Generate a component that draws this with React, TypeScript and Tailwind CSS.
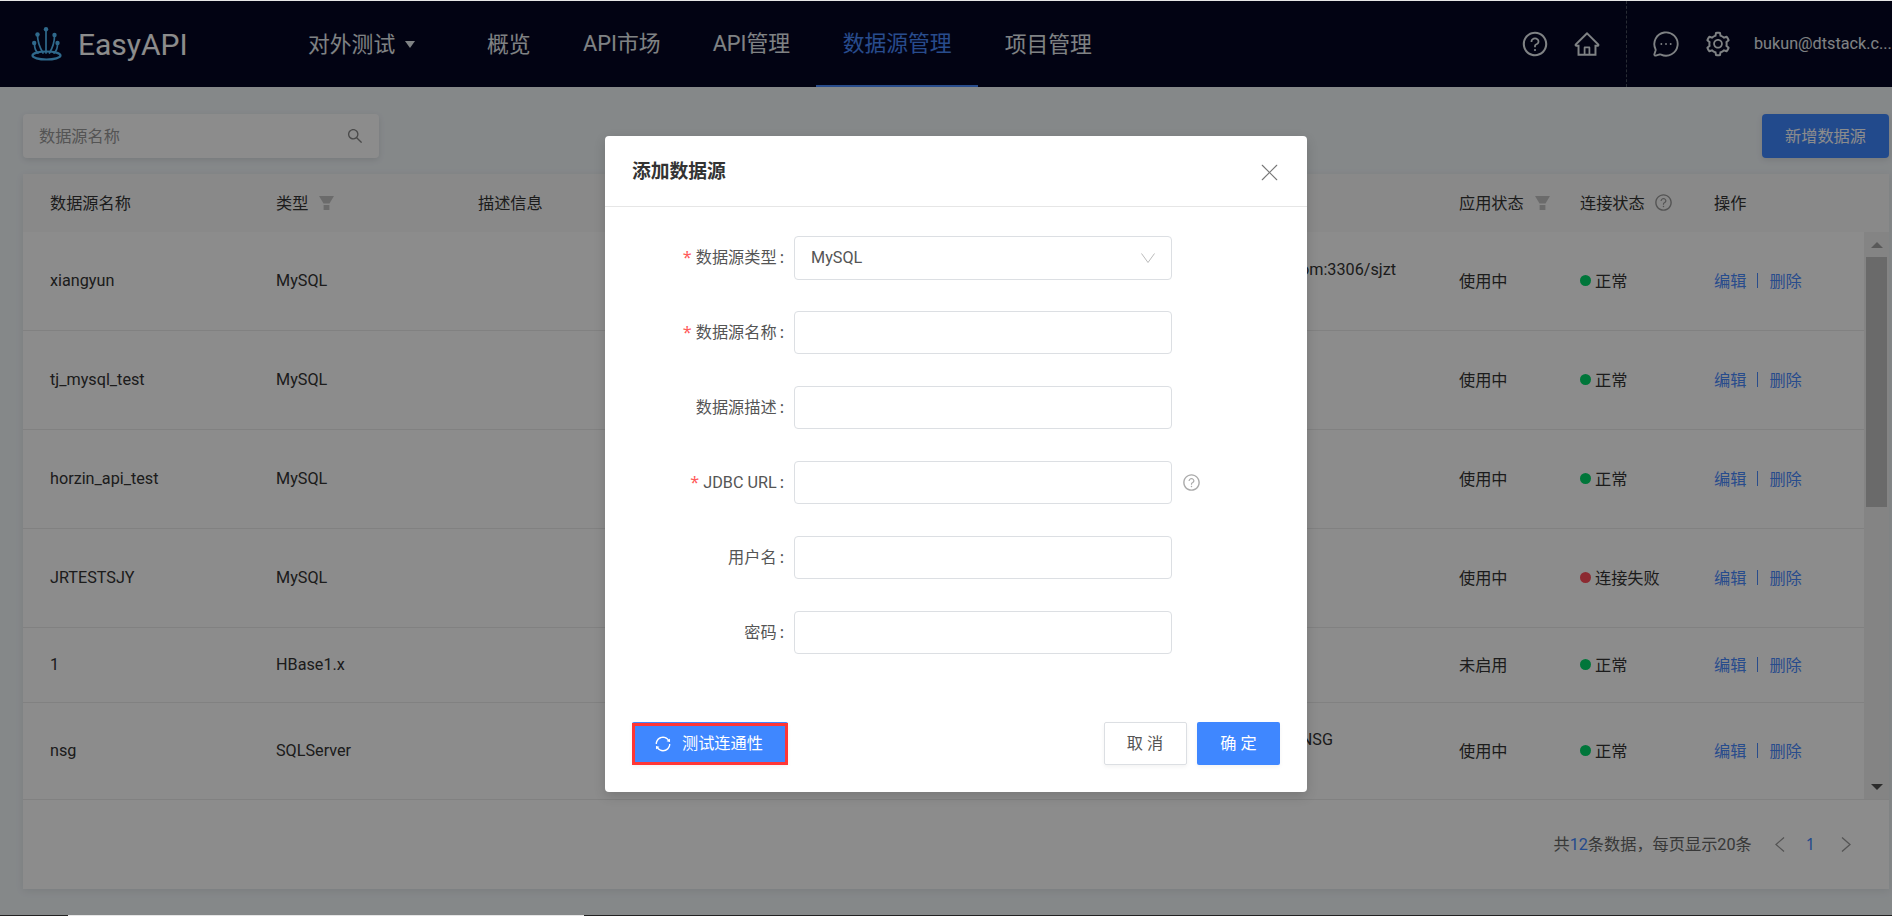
import { MessageCircleMore, X } from 'lucide-react'
import { AiOutlineHome, AiOutlineQuestionCircle, AiOutlineSearch, AiOutlineSetting, AiOutlineSync } from 'react-icons/ai'

interface Row {
  name: string
  type: string
  url?: string
  urlPad?: string
  state: string
  ok: boolean
  height: string
}

const rows: Row[] = [
  { name: 'xiangyun', type: 'MySQL', url: 'com:3306/sjzt', urlPad: 'pr-[63px]', state: '使用中', ok: true, height: 'h-[99px]' },
  { name: 'tj_mysql_test', type: 'MySQL', state: '使用中', ok: true, height: 'h-[99px]' },
  { name: 'horzin_api_test', type: 'MySQL', state: '使用中', ok: true, height: 'h-[99px]' },
  { name: 'JRTESTSJY', type: 'MySQL', state: '使用中', ok: false, height: 'h-[99px]' },
  { name: '1', type: 'HBase1.x', state: '未启用', ok: true, height: 'h-[75px]' },
  { name: 'nsg', type: 'SQLServer', url: 'NSG', urlPad: 'pr-[126px]', state: '使用中', ok: true, height: 'h-[96px]' },
]

const gridCols = 'grid grid-cols-[226px_202px_302px_679px_121px_134px_1fr] pl-[27px] items-center'

// latin strings sit narrower than Noto Sans in the reference
function L({ children }: { children: React.ReactNode }) {
  return <span className="font-['Roboto',sans-serif]">{children}</span>
}

function Logo() {
  return (
    <svg width="32" height="34" viewBox="0 0 32 34" fill="none" stroke="#56c0ff" strokeWidth="1.7" strokeLinecap="round">
      <ellipse cx="15.5" cy="28.5" rx="14" ry="4" strokeWidth="2.2" />
      <path d="M15 3v23" />
      <path d="M6.5 8c0 6 2 12 5.5 18" />
      <path d="M23.5 9c0 6-1.5 11-5 17" />
      <path d="M3.5 17c0 4 1 7 3.5 9" />
      <path d="M26.5 17c0 4-1 7-3.5 9" />
      <g fill="#56c0ff" stroke="none">
        <circle cx="15" cy="2.2" r="2.2" />
        <circle cx="6.5" cy="7.5" r="2.2" />
        <circle cx="23.5" cy="8" r="2.2" />
        <circle cx="3.2" cy="16" r="2.2" />
        <circle cx="26.5" cy="16" r="2.2" />
      </g>
    </svg>
  )
}

function FilterIcon() {
  return (
    <svg width="15" height="14" viewBox="0 0 15 14" className="ml-[11px]">
      <path d="M0 0h15l-4.5 7.5h-6z" fill="#c4c4c4" />
      <rect x="4.6" y="9" width="5.8" height="5" fill="#c4c4c4" />
    </svg>
  )
}

function PageArrow({ right }: { right?: boolean }) {
  return (
    <svg width="10" height="15" viewBox="0 0 10 15" fill="none" stroke="#999" strokeWidth="1.3">
      <path d={right ? 'M1 0.5l8 7-8 7' : 'M9 0.5l-8 7 8 7'} />
    </svg>
  )
}

function FormRow({ label, required, children }: { label: React.ReactNode; required?: boolean; children: React.ReactNode }) {
  return (
    <div className="flex h-[75px] items-start">
      <div className="flex h-[43px] w-[179px] items-center justify-end text-[#555]">
        {required && <span className="mr-[4px] text-[#ff5a5a]">*</span>}
        <span>{label}</span>
        <span className="ml-[3px]">:</span>
      </div>
      <div className="ml-[10px] flex items-center">{children}</div>
    </div>
  )
}

function TextBox() {
  return <div className="h-[43px] w-[378px] rounded-[4px] border border-[#dcdfe3] bg-white" />
}

export default function App() {
  return (
    <div className="flex h-[916px] w-full flex-col overflow-hidden bg-[#f2f7fa] font-['Noto_Sans','Noto_Sans_CJK_SC',sans-serif] text-[16.2px] text-[#333]">
      <div className="h-px shrink-0 bg-[#e6e6e6]" />

      <div className="relative flex-1">
        {/* top bar */}
        <header className="flex h-[86px] items-stretch bg-[#050723] text-[21.8px] text-[#e8edf1]">
          <div className="ml-[31px] flex w-[277px] shrink-0 items-center gap-[15px]">
            <Logo />
            <span className="text-[30px] text-white">
              <L>EasyAPI</L>
            </span>
          </div>
          <div className="flex w-[152.5px] shrink-0 items-center">
            <span>对外测试</span>
            <span className="ml-[10px] h-0 w-0 border-x-[5px] border-t-[7px] border-x-transparent border-t-[#e8edf1]" />
          </div>
          <nav className="flex items-stretch">
            <a className="flex items-center px-[26.5px]">概览</a>
            <a className="flex items-center px-[26px]">
              <span>
                <L>API</L>市场
              </span>
            </a>
            <a className="flex items-center px-[26px]">
              <span>
                <L>API</L>管理
              </span>
            </a>
            <a className="flex items-center border-b-[2px] border-[#4a8aff] px-[26.5px] text-[#4a8aff]">数据源管理</a>
            <a className="flex items-center px-[26.5px]">项目管理</a>
          </nav>
          <div className="ml-auto flex items-center">
            <AiOutlineQuestionCircle size={28} />
            <AiOutlineHome size={28} className="ml-[24px]" />
            <div className="ml-[25px] h-full border-l border-dashed border-[#4a5060]" />
            <MessageCircleMore size={28} strokeWidth={1.6} className="ml-[25px]" />
            <AiOutlineSetting size={28} className="ml-[24px]" />
            <span className="ml-[22px] mr-[4px] w-[134px] whitespace-nowrap text-[16.2px]">
              <L>bukun@dtstack.c...</L>
            </span>
          </div>
        </header>

        <main className="px-[23px] pr-[3px]">
          {/* toolbar */}
          <div className="flex h-[87px] items-end justify-between pb-[16px]">
            <div className="flex h-[44px] w-[356px] items-center justify-between rounded-[4px] bg-white pl-[16px] pr-[15px] shadow-[0_2px_6px_rgba(0,0,0,0.1)]">
              <span className="text-[#999]">数据源名称</span>
              <AiOutlineSearch size={18} className="text-[#888]" />
            </div>
            <button className="flex h-[44px] w-[127px] items-center justify-center rounded-[4px] bg-[#3f87ff] text-white shadow-[0_2px_6px_rgba(0,0,0,0.1)]">
              新增数据源
            </button>
          </div>

          {/* table */}
          <section className="h-[715px] bg-white shadow-[0_2px_8px_rgba(0,0,0,0.08)]">
            <div className={`${gridCols} h-[58px] bg-[#fafafa]`}>
              <span>数据源名称</span>
              <span className="flex items-center">
                类型
                <FilterIcon />
              </span>
              <span>描述信息</span>
              <span />
              <span className="flex items-center">
                应用状态
                <FilterIcon />
              </span>
              <span className="flex items-center">
                连接状态
                <AiOutlineQuestionCircle size={19} className="ml-[9px] text-[#999]" />
              </span>
              <span>操作</span>
            </div>

            <div className="flex h-[567px]">
              <div className="flex-1">
                {rows.map((row) => (
                  <div key={row.name} className={`${gridCols} ${row.height} border-b border-[#ececec] last:border-b-0`}>
                    <span>
                      <L>{row.name}</L>
                    </span>
                    <span>
                      <L>{row.type}</L>
                    </span>
                    <span />
                    <div className={`mb-[22px] whitespace-nowrap text-right ${row.urlPad ?? ''}`}>
                      <L>{row.url}</L>
                    </div>
                    <span>{row.state}</span>
                    <span className="flex items-center gap-[4px]">
                      <span className={`size-[11px] rounded-full ${row.ok ? 'bg-[#00d86a]' : 'bg-[#ff4d5a]'}`} />
                      {row.ok ? '正常' : '连接失败'}
                    </span>
                    <span className="flex items-center text-[#4a8aff]">
                      编辑
                      <span className="mx-[11px] h-[15px] w-px bg-[#4a8aff]" />
                      删除
                    </span>
                  </div>
                ))}
              </div>

              {/* scrollbar */}
              <div className="flex w-[25px] flex-col items-center bg-[#f1f1f1]">
                <span className="mt-[10px] h-0 w-0 border-x-[6px] border-b-[6px] border-x-transparent border-b-[#a3a3a3]" />
                <div className="mt-[9px] h-[250px] w-[21px] bg-[#c1c1c1]" />
                <span className="mt-auto mb-[9px] h-0 w-0 border-x-[6px] border-t-[6px] border-x-transparent border-t-[#505050]" />
              </div>
            </div>

            <div className="flex h-[90px] items-center justify-end border-t border-[#ececec] pr-[38px]">
              <span className="text-[#666]">
                共<span className="text-[#3f87ff]"><L>12</L></span>条数据，每页显示<L>20</L>条
              </span>
              <span className="ml-[23px]">
                <PageArrow />
              </span>
              <span className="ml-[21px] text-[#3f87ff]">1</span>
              <span className="ml-[26px]">
                <PageArrow right />
              </span>
            </div>
          </section>
        </main>

        {/* dialog mask */}
        <div className="absolute inset-0 bg-black/45" />

        <div className="absolute left-[605px] top-[135px] flex h-[656px] w-[702px] flex-col rounded-[4px] bg-white shadow-[0_4px_12px_rgba(0,0,0,0.15)]">
          <div className="flex h-[71px] shrink-0 items-center justify-between border-b border-[#e6e6e6] pl-[27px] pr-[23px]">
            <span className="text-[18.8px] font-bold text-[#333]">添加数据源</span>
            <X size={29} strokeWidth={0.9} className="mt-[3px] text-[#777]" />
          </div>

          <div className="pt-[29px]">
            <FormRow label="数据源类型" required>
              <div className="flex h-[44px] w-[378px] items-center justify-between rounded-[4px] border border-[#dcdfe3] pl-[16px] pr-[16px]">
                <span className="text-[#555]">
                  <L>MySQL</L>
                </span>
                <svg width="14" height="10" viewBox="0 0 14 10" fill="none" stroke="#bbb" strokeWidth="1">
                  <path d="M0.5 0.5L7 9.5L13.5 0.5" />
                </svg>
              </div>
            </FormRow>
            <FormRow label="数据源名称" required>
              <TextBox />
            </FormRow>
            <FormRow label="数据源描述">
              <TextBox />
            </FormRow>
            <FormRow label={<L>JDBC URL</L>} required>
              <TextBox />
              <AiOutlineQuestionCircle size={19} className="ml-[10px] text-[#aaa]" />
            </FormRow>
            <FormRow label="用户名">
              <TextBox />
            </FormRow>
            <FormRow label="密码">
              <TextBox />
            </FormRow>
          </div>

          <div className="mt-auto flex items-center justify-between px-[27px] pb-[27px]">
            <button className="relative flex h-[43px] w-[156px] items-center rounded-[2px] bg-[#3f87ff] pl-[22px] text-white shadow-[0_2px_4px_rgba(0,0,0,0.05)]">
              <AiOutlineSync size={18} />
              <span className="ml-[10px]">测试连通性</span>
              <span className="absolute inset-x-0 bottom-0 top-px border-[3px] border-[#ff3636]" />
            </button>
            <div className="flex gap-[10px]">
              <button className="h-[43px] w-[83px] rounded-[2px] border border-[#dcdfe3] pl-[3px] tracking-[4px] text-[#555] shadow-[0_2px_4px_rgba(0,0,0,0.05)]">
                取消
              </button>
              <button className="h-[43px] w-[83px] rounded-[2px] bg-[#3f87ff] pl-[4px] tracking-[4px] text-white shadow-[0_2px_4px_rgba(0,0,0,0.05)]">
                确定
              </button>
            </div>
          </div>
        </div>
      </div>

      <div className="flex h-px shrink-0 bg-[#222]">
        <div className="ml-[68px] w-[516px] bg-[#e6e6e6]" />
      </div>
    </div>
  )
}
